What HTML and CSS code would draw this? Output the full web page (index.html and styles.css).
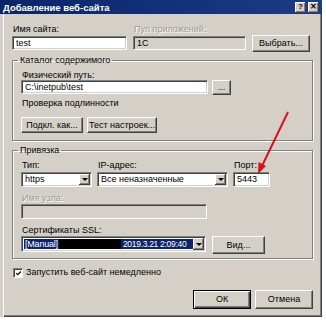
FILE: index.html
```html
<!DOCTYPE html>
<html lang="ru">
<head>
  <meta charset="UTF-8" />
  <title>Добавление веб-сайта</title>
  <link rel="stylesheet" href="styles.css">
</head>
<body>
  <div class="window">
    <div class="titlebar">
      <span class="title">Добавление веб-сайта</span>
      <div class="caption-btns">
        <span class="cbtn">?</span>
        <span class="cbtn">✕</span>
      </div>
    </div>

    <div class="content">
      <div class="top-row">
        <div class="field f-name">
          <label>Имя сайта:</label>
          <div class="input">test</div>
        </div>
        <div class="field f-pool">
          <label class="disabled">Пул приложений:</label>
          <div class="input readonly">1C</div>
        </div>
        <button class="btn btn-select">Выбрать...</button>
      </div>

      <fieldset class="group group-dir">
        <legend>Каталог содержимого</legend>
        <div class="lbl">Физический путь:</div>
        <div class="path-row">
          <div class="input path-input">C:\inetpub\test</div>
          <button class="btn btn-dots">...</button>
        </div>
        <div class="lbl lbl-auth">Проверка подлинности</div>
        <div class="btn-row">
          <button class="btn btn-connect">Подкл. как...</button>
          <button class="btn btn-test">Тест настроек...</button>
        </div>
      </fieldset>

      <fieldset class="group group-bind">
        <legend>Привязка</legend>
        <div class="bind-row">
          <div class="col col-type">
            <div class="lbl">Тип:</div>
            <div class="select">
              <span class="val">https</span>
              <span class="arrow"><i></i></span>
            </div>
          </div>
          <div class="col col-ip">
            <div class="lbl">IP-адрес:</div>
            <div class="select">
              <span class="val">Все неназначенные</span>
              <span class="arrow"><i></i></span>
            </div>
          </div>
          <div class="col col-port">
            <div class="lbl">Порт:</div>
            <div class="input port-input">5443</div>
          </div>
        </div>
        <div class="lbl lbl-host disabled">Имя узла:</div>
        <div class="input readonly host-input"></div>
        <div class="lbl lbl-ssl">Сертификаты SSL:</div>
        <div class="ssl-row">
          <div class="select ssl-select">
            <span class="val selected">
              <span class="focus">[Manual]</span>
              <span class="redact"></span>
              <span class="date">2019.3.21 2:09:40</span>
            </span>
            <span class="arrow"><i></i></span>
          </div>
          <button class="btn btn-view">Вид...</button>
        </div>
      </fieldset>

      <div class="check-row">
        <span class="checkbox">
          <svg width="9" height="9" viewBox="0 0 9 9"><path d="M1.5 4 L3.5 6 L7.5 2" fill="none" stroke="#000" stroke-width="1.6"/></svg>
        </span>
        <span>Запустить веб-сайт немедленно</span>
      </div>

      <div class="footer">
        <button class="btn btn-ok">ОК</button>
        <button class="btn btn-cancel">Отмена</button>
      </div>
    </div>

    <!-- стрелка поверх окна -->
    <svg class="arrow-mark" width="326" height="320" viewBox="0 0 326 320">
      <line x1="288" y1="112" x2="262" y2="166" stroke="#d8101c" stroke-width="2"/>
      <polygon points="258,174 266,166 258.5,162" fill="#d8101c"/>
    </svg>
  </div>
</body>
</html>
```

FILE: styles.css
```css
* {
  box-sizing: border-box;
}

body {
  margin: 0;
  background: #fff;
  font-family: "Liberation Sans", Arial, sans-serif;
  font-size: 9px;
  color: #000;
}

.window {
  position: relative;
  width: 322px;
  height: 317px;
  background: #d4d0c8;
  box-shadow: inset 3px 0 #d4d0c8, inset 4px 0 #fff, inset -1px -1px #404040, inset -2px -2px #808080;
}

.titlebar {
  height: 14px;
  display: flex;
  align-items: center;
  justify-content: space-between;
  padding: 0 3px;
  background: linear-gradient(90deg, #0a246a, #1b3c86);
  color: #fff;
  font-weight: bold;
  font-size: 9.5px;
}

.caption-btns {
  display: flex;
  gap: 2px;
}

.cbtn {
  width: 11px;
  height: 11px;
  background: #d4d0c8;
  box-shadow: inset -1px -1px #404040, inset 1px 1px #fff, inset -2px -2px #808080;
  display: flex;
  align-items: center;
  justify-content: center;
  font-size: 8px;
  line-height: 1;
  color: #000;
}

.content {
  padding: 10px 9px 0 12px;
}

label,
.lbl {
  display: block;
  line-height: 11px;
  padding-left: 1px;
}

.disabled {
  color: #9a9890;
  text-shadow: 1px 1px #fff;
}

.top-row {
  display: flex;
  align-items: flex-end;
}

.f-name {
  width: 115px;
}

.f-pool {
  width: 113px;
  margin-left: 6px;
}

.field .input {
  margin-top: 1px;
}

.input {
  height: 14px;
  background: #fff;
  border: 1px solid;
  border-color: #808080 #fff #fff #808080;
  box-shadow: inset 1px 1px #404040, inset -1px -1px #d4d0c8;
  padding: 0 3px;
  line-height: 12px;
  white-space: nowrap;
  overflow: hidden;
}

.input.readonly {
  background: #d4d0c8;
}

.btn {
  font-family: inherit;
  font-size: 9px;
  color: #000;
  background: #d4d0c8;
  border: 1px solid;
  border-color: #fff #404040 #404040 #fff;
  box-shadow: inset -1px -1px #808080;
  padding: 0;
  border-radius: 0;
  line-height: 1;
}

.btn-select {
  width: 58px;
  height: 17px;
  margin-left: 6px;
  margin-bottom: -2px;
}

.group {
  margin: 5px 0 0;
  padding: 4px 8px 7px 8px;
  border: 1px solid #808080;
  box-shadow: inset 1px 1px #fff, 1px 1px #fff;
}

.group legend {
  padding: 0 2px;
  margin-left: -3px;
  line-height: 11px;
}

.path-row {
  display: flex;
  align-items: flex-start;
  margin-top: -1px;
}

.path-input {
  width: 187px;
}

.btn-dots {
  width: 19px;
  height: 15px;
  margin-left: 4px;
}

.lbl-auth {
  margin-top: 3px;
}

.btn-row {
  display: flex;
  gap: 4px;
  margin-top: 8px;
}

.btn-connect {
  width: 62px;
  height: 16px;
}

.btn-test {
  width: 70px;
  height: 16px;
}

.group-bind {
  margin-top: 4px;
  padding-bottom: 4px;
}

.bind-row {
  display: flex;
  gap: 5px;
}

.col-type {
  width: 71px;
}

.col-ip {
  width: 131px;
}

.col-port {
  width: 37px;
}

.col .select,
.col .input {
  margin-top: 1px;
}

.port-input {
  height: 15px;
}

.select {
  display: flex;
  height: 15px;
  padding: 2px;
  background: #fff;
  border: 1px solid;
  border-color: #808080 #fff #fff #808080;
  box-shadow: inset 1px 1px #404040, inset -1px -1px #d4d0c8;
}

.select .val {
  flex: 1;
  padding-left: 1px;
  line-height: 9px;
  white-space: nowrap;
  overflow: hidden;
}

.select .arrow {
  width: 11px;
  margin: -1px -1px -1px 0;
  background: #d4d0c8;
  box-shadow: inset -1px -1px #404040, inset 1px 1px #fff, inset -2px -2px #808080;
  display: flex;
  align-items: center;
  justify-content: center;
}

.select .arrow i {
  width: 0;
  height: 0;
  border-left: 3px solid transparent;
  border-right: 3px solid transparent;
  border-top: 3px solid #000;
}

.lbl-host {
  margin-top: 6px;
}

.host-input {
  width: 186px;
  height: 15px;
}

.lbl-ssl {
  margin-top: 6px;
}

.ssl-row {
  display: flex;
  align-items: flex-start;
}

.ssl-select {
  width: 185px;
  height: 16px;
}

.val.selected {
  display: flex;
  background: #0a246a;
  color: #fff;
  padding-left: 0;
  line-height: 10px;
}

.val.selected .focus {
  padding: 0 1px;
  letter-spacing: -0.2px;
}

.val.selected .redact {
  width: 62px;
  flex: none;
  background: #000;
}

.val.selected .date {
  flex: none;
  padding-left: 2px;
  font-size: 8.5px;
  letter-spacing: -0.3px;
}

.btn-view {
  width: 53px;
  height: 18px;
  margin-left: 6px;
}

.check-row {
  display: flex;
  align-items: center;
  margin-top: 8px;
  padding-left: 1px;
  line-height: 11px;
}

.checkbox {
  width: 10px;
  height: 10px;
  margin-right: 3px;
  background: #fff;
  border: 1px solid;
  border-color: #808080 #fff #fff #808080;
  box-shadow: inset 1px 1px #404040;
  display: flex;
  align-items: center;
  justify-content: center;
}

.checkbox svg {
  margin: 1px 0 0 1px;
}

.footer {
  display: flex;
  justify-content: flex-end;
  gap: 4px;
  margin-top: 12px;
}

.btn-ok,
.btn-cancel {
  width: 58px;
  height: 19px;
}

.btn-ok {
  border-color: #000;
  box-shadow: inset 1px 1px #fff, inset -1px -1px #404040, inset -2px -2px #808080;
}

.arrow-mark {
  position: absolute;
  left: 0;
  top: 0;
  pointer-events: none;
}
```
